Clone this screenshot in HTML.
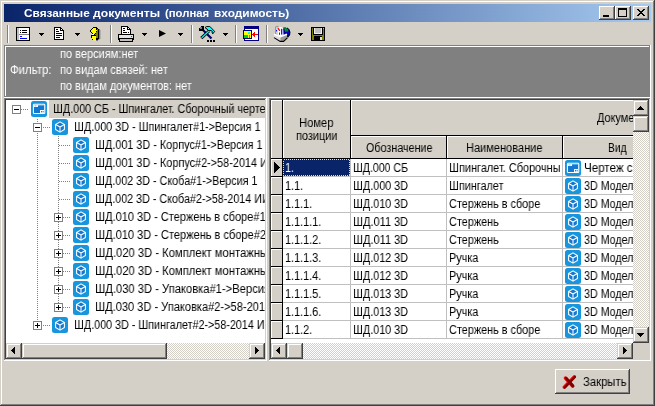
<!DOCTYPE html><html><head><meta charset="utf-8"><title>Связанные документы</title><style>
html,body{margin:0;padding:0}
body{width:655px;height:406px;overflow:hidden;background:#d4d0c8;font:12px/18px 'Liberation Sans', sans-serif;position:relative;color:#000}
.abs{position:absolute;display:block}
.ic{position:absolute;display:block}
.t{position:absolute;white-space:nowrap;transform-origin:0 0;display:block;will-change:transform}
.btn{background:#d4d0c8;box-sizing:border-box;box-shadow:inset -1px -1px 0 #404040,inset 1px 1px 0 #d4d0c8,inset -2px -2px 0 #808080,inset 2px 2px 0 #fff}
.trk{background-color:#fff;background-image:linear-gradient(45deg,#d4d0c8 25%,transparent 25%,transparent 75%,#d4d0c8 75%),linear-gradient(45deg,#d4d0c8 25%,transparent 25%,transparent 75%,#d4d0c8 75%);background-size:2px 2px;background-position:0 0,1px 1px}
.btn2{background:#d4d0c8;box-sizing:border-box;box-shadow:inset -1px -1px 0 #404040,inset 1px 1px 0 #fff,inset -2px -2px 0 #808080,inset 2px 2px 0 #d4d0c8}
.sunk{box-sizing:border-box;background:#fff;box-shadow:inset -1px -1px 0 #fff,inset 1px 1px 0 #808080,inset -2px -2px 0 #d4d0c8,inset 2px 2px 0 #404040}
</style></head><body><div class="abs" style="left:0;top:0;width:655px;height:406px;box-shadow:inset -1px -1px 0 #404040,inset 1px 1px 0 #d4d0c8,inset -2px -2px 0 #808080,inset 2px 2px 0 #fff"></div><div class="abs" style="left:4px;top:4px;width:647px;height:18px;background:linear-gradient(90deg,#0a246a,#a6caf0)"></div><span class="t" style="left:23.6px;top:4px;line-height:18px;color:#fff;transform:scaleX(1.0746);font-weight:bold;font-size:11px">Связанные</span><span class="t" style="left:93.4px;top:4px;line-height:18px;color:#fff;transform:scaleX(1.1039);font-weight:bold;font-size:11px">документы</span><span class="t" style="left:165px;top:4px;line-height:18px;color:#fff;transform:scaleX(1.0298);font-weight:bold;font-size:11px">(полная</span><span class="t" style="left:213.8px;top:4px;line-height:18px;color:#fff;transform:scaleX(1.0832);font-weight:bold;font-size:11px">входимость)</span><div class="btn2 abs" style="left:599px;top:6px;width:16px;height:14px"><i class="abs" style="left:4px;top:9px;width:6px;height:2px;background:#000"></i></div><div class="btn2 abs" style="left:615px;top:6px;width:16px;height:14px"><i class="abs" style="left:3px;top:2px;width:9px;height:9px;box-sizing:border-box;border:1px solid #000;border-top-width:2px"></i></div><div class="btn2 abs" style="left:633px;top:6px;width:16px;height:14px"><svg class="abs" style="left:4px;top:3px" width="8" height="7" shape-rendering="crispEdges"><path d="M0 0h2v1h-2zM6 0h2v1h-2zM1 1h2v1h-2zM5 1h2v1h-2zM2 2h4v1h-4zM3 3h2v1h-2zM2 4h4v1h-4zM1 5h2v1h-2zM5 5h2v1h-2zM0 6h2v1h-2zM6 6h2v1h-2z" fill="#000"/></svg></div><i class="abs" style="left:7px;top:25px;width:1px;height:18px;background:#808080"></i><i class="abs" style="left:8px;top:25px;width:1px;height:18px;background:#fff"></i><svg class="abs" style="left:16px;top:27px" width="14" height="14" shape-rendering="crispEdges"><rect x="0.5" y="0.5" width="13" height="13" fill="#fff" stroke="#000"/><rect x="1" y="1" width="2" height="12" fill="#c0c0c0"/><rect x="3" y="7" width="10" height="1" fill="#808080"/><rect x="4" y="3" width="1" height="1" fill="#000"/><rect x="6" y="3" width="5" height="1" fill="#000"/><rect x="4" y="5" width="1" height="1" fill="#000"/><rect x="6" y="5" width="5" height="1" fill="#000"/><rect x="4" y="9" width="2" height="1" fill="#00f"/><rect x="4" y="11" width="7" height="1" fill="#00f"/></svg><i class="abs" style="left:39px;top:33px;width:5px;height:1px;background:#000"></i><i class="abs" style="left:40px;top:34px;width:3px;height:1px;background:#000"></i><i class="abs" style="left:41px;top:35px;width:1px;height:1px;background:#000"></i><svg class="abs" style="left:54px;top:27px" width="10" height="13" shape-rendering="crispEdges"><path d="M0.5 0.5 H6.5 L9.5 3.5 V12.5 H0.5 Z" fill="#fff" stroke="#000"/><path d="M6.5 0.5 V3.5 H9.5" fill="none" stroke="#000"/><rect x="2" y="2" width="2" height="1"/><rect x="2" y="4" width="3" height="1"/><rect x="2" y="6" width="6" height="1"/><rect x="2" y="8" width="6" height="1"/><rect x="2" y="10" width="4" height="1"/></svg><i class="abs" style="left:75px;top:33px;width:5px;height:1px;background:#000"></i><i class="abs" style="left:76px;top:34px;width:3px;height:1px;background:#000"></i><i class="abs" style="left:77px;top:35px;width:1px;height:1px;background:#000"></i><svg class="abs" style="left:90px;top:27px" width="11" height="14" shape-rendering="crispEdges"><rect x="3" y="0" width="4" height="1" fill="#000"/><rect x="2" y="1" width="1" height="1" fill="#000"/><rect x="3" y="1" width="3" height="1" fill="#ff0"/><rect x="6" y="1" width="2" height="1" fill="#000"/><rect x="1" y="2" width="1" height="1" fill="#000"/><rect x="2" y="2" width="4" height="1" fill="#ff0"/><rect x="6" y="2" width="1" height="1" fill="#000"/><rect x="7" y="2" width="1" height="1" fill="#808000"/><rect x="8" y="2" width="1" height="1" fill="#000"/><rect x="9" y="2" width="1" height="1" fill="#808080"/><rect x="0" y="3" width="1" height="1" fill="#000"/><rect x="1" y="3" width="6" height="1" fill="#ff0"/><rect x="7" y="3" width="1" height="1" fill="#808000"/><rect x="8" y="3" width="1" height="1" fill="#000"/><rect x="9" y="3" width="1" height="1" fill="#808080"/><rect x="10" y="3" width="1" height="1" fill="#b4b2ac"/><rect x="0" y="4" width="1" height="1" fill="#000"/><rect x="1" y="4" width="5" height="1" fill="#ff0"/><rect x="6" y="4" width="1" height="1" fill="#000"/><rect x="7" y="4" width="1" height="1" fill="#808000"/><rect x="8" y="4" width="1" height="1" fill="#000"/><rect x="9" y="4" width="1" height="1" fill="#808080"/><rect x="10" y="4" width="1" height="1" fill="#b4b2ac"/><rect x="1" y="5" width="1" height="1" fill="#000"/><rect x="2" y="5" width="4" height="1" fill="#ff0"/><rect x="6" y="5" width="2" height="1" fill="#808000"/><rect x="8" y="5" width="1" height="1" fill="#000"/><rect x="9" y="5" width="1" height="1" fill="#808080"/><rect x="10" y="5" width="1" height="1" fill="#b4b2ac"/><rect x="2" y="6" width="1" height="1" fill="#000"/><rect x="3" y="6" width="2" height="1" fill="#ff0"/><rect x="5" y="6" width="1" height="1" fill="#000"/><rect x="6" y="6" width="2" height="1" fill="#808000"/><rect x="8" y="6" width="1" height="1" fill="#000"/><rect x="9" y="6" width="1" height="1" fill="#808080"/><rect x="10" y="6" width="1" height="1" fill="#b4b2ac"/><rect x="2" y="7" width="2" height="1" fill="#fff"/><rect x="4" y="7" width="1" height="1" fill="#000"/><rect x="5" y="7" width="3" height="1" fill="#808000"/><rect x="8" y="7" width="1" height="1" fill="#000"/><rect x="9" y="7" width="1" height="1" fill="#808080"/><rect x="10" y="7" width="1" height="1" fill="#b4b2ac"/><rect x="1" y="8" width="5" height="1" fill="#000"/><rect x="6" y="8" width="2" height="1" fill="#808000"/><rect x="8" y="8" width="1" height="1" fill="#000"/><rect x="9" y="8" width="1" height="1" fill="#808080"/><rect x="10" y="8" width="1" height="1" fill="#b4b2ac"/><rect x="1" y="9" width="1" height="1" fill="#000"/><rect x="2" y="9" width="4" height="1" fill="#ff0"/><rect x="6" y="9" width="2" height="1" fill="#808000"/><rect x="8" y="9" width="1" height="1" fill="#000"/><rect x="9" y="9" width="1" height="1" fill="#808080"/><rect x="10" y="9" width="1" height="1" fill="#b4b2ac"/><rect x="1" y="10" width="1" height="1" fill="#000"/><rect x="2" y="10" width="4" height="1" fill="#ff0"/><rect x="6" y="10" width="2" height="1" fill="#808000"/><rect x="8" y="10" width="1" height="1" fill="#000"/><rect x="9" y="10" width="1" height="1" fill="#808080"/><rect x="10" y="10" width="1" height="1" fill="#b4b2ac"/><rect x="2" y="11" width="4" height="1" fill="#ff0"/><rect x="6" y="11" width="3" height="1" fill="#000"/><rect x="9" y="11" width="1" height="1" fill="#808080"/><rect x="10" y="11" width="1" height="1" fill="#b4b2ac"/><rect x="2" y="12" width="1" height="1" fill="#000"/><rect x="3" y="12" width="3" height="1" fill="#ff0"/><rect x="6" y="12" width="2" height="1" fill="#000"/><rect x="8" y="12" width="1" height="1" fill="#808080"/><rect x="9" y="12" width="1" height="1" fill="#b4b2ac"/><rect x="3" y="13" width="3" height="1" fill="#e8e4a0"/><rect x="6" y="13" width="2" height="1" fill="#808080"/></svg><i class="abs" style="left:110px;top:25px;width:1px;height:18px;background:#808080"></i><i class="abs" style="left:111px;top:25px;width:1px;height:18px;background:#fff"></i><svg class="abs" style="left:118px;top:26px" width="16" height="16" shape-rendering="crispEdges"><path d="M3.5 8.5 V0.5 H9.5 L12.5 3.5 V8.5" fill="#fff" stroke="#000"/><path d="M9.5 0.5 V3.5 H12.5" fill="none" stroke="#000"/><rect x="5" y="2" width="2" height="1"/><rect x="5" y="4" width="2" height="1"/><rect x="5" y="6" width="4" height="1"/><rect x="10" y="6" width="1" height="1"/><rect x="0.5" y="8.5" width="15" height="6" fill="#e4e4e4" stroke="#000"/><rect x="1" y="12" width="14" height="1" fill="#000"/><rect x="1" y="13" width="14" height="2" fill="#c0c0c0"/><rect x="1" y="15" width="14" height="1" fill="#000"/><rect x="1" y="13" width="1" height="2" fill="#000"/><rect x="14" y="13" width="1" height="2" fill="#000"/><rect x="0" y="14" width="1" height="2" fill="#d4d0c8"/><rect x="15" y="14" width="1" height="2" fill="#d4d0c8"/><rect x="13" y="10" width="1" height="1" fill="#f00"/></svg><i class="abs" style="left:142px;top:33px;width:5px;height:1px;background:#000"></i><i class="abs" style="left:143px;top:34px;width:3px;height:1px;background:#000"></i><i class="abs" style="left:144px;top:35px;width:1px;height:1px;background:#000"></i><svg class="abs" style="left:159px;top:29px" width="8" height="10"><path d="M0 1 L7 4.5 L0 8 Z" fill="#000"/></svg><i class="abs" style="left:178px;top:33px;width:5px;height:1px;background:#000"></i><i class="abs" style="left:179px;top:34px;width:3px;height:1px;background:#000"></i><i class="abs" style="left:180px;top:35px;width:1px;height:1px;background:#000"></i><i class="abs" style="left:191px;top:25px;width:1px;height:18px;background:#808080"></i><i class="abs" style="left:192px;top:25px;width:1px;height:18px;background:#fff"></i><svg class="abs" style="left:199px;top:26px" width="17" height="16"><path d="M4 4 L12.5 12.5" stroke="#000060" stroke-width="2.2"/><g shape-rendering="crispEdges"><rect x="2" y="0" width="3" height="1"/><rect x="3" y="0" width="2" height="5"/><rect x="0" y="2" width="2" height="3"/><rect x="0" y="3" width="5" height="2"/><rect x="1" y="1" width="2" height="2" fill="#808080"/></g><path d="M10 5 L2.3 12.2" stroke="#000" stroke-width="3"/><path d="M10.3 4.7 L2.6 11.9" stroke="#0ff" stroke-width="1.3"/><path d="M6 1.6 L7.6 0.4 H10.8 L15.6 5.4 L13.9 7.8 L13 7 L13.4 5.4 L12 4.6 H9.2 L8 3 Z" fill="#0ff" stroke="#000" stroke-width="1"/><g shape-rendering="crispEdges"><rect x="8" y="14" width="2" height="2"/><rect x="11" y="14" width="2" height="2"/><rect x="14" y="14" width="2" height="2"/></g></svg><i class="abs" style="left:223px;top:33px;width:5px;height:1px;background:#000"></i><i class="abs" style="left:224px;top:34px;width:3px;height:1px;background:#000"></i><i class="abs" style="left:225px;top:35px;width:1px;height:1px;background:#000"></i><i class="abs" style="left:235px;top:25px;width:1px;height:18px;background:#808080"></i><i class="abs" style="left:236px;top:25px;width:1px;height:18px;background:#fff"></i><svg class="abs" style="left:243px;top:26px" width="16" height="15" shape-rendering="crispEdges"><rect x="1.5" y="0.5" width="14" height="14" fill="#fff" stroke="#000080"/><rect x="1" y="0" width="15" height="3" fill="#000080"/><rect x="0.5" y="4.5" width="8" height="8" fill="#ff0" stroke="#000080"/><path d="M1 12 V8 L4 12 Z" fill="#0c0"/><rect x="1" y="9" width="3" height="3" fill="#00d000"/><rect x="5" y="6" width="2" height="2" fill="#0ff"/><rect x="4" y="9" width="1" height="3" fill="#0c0"/><rect x="6" y="9" width="1" height="3" fill="#0aa"/><rect x="9" y="8" width="6" height="1" fill="#f00"/><rect x="10" y="7" width="1" height="3" fill="#f00"/><rect x="11" y="6" width="1" height="5" fill="#f00"/></svg><i class="abs" style="left:266px;top:25px;width:1px;height:18px;background:#808080"></i><i class="abs" style="left:267px;top:25px;width:1px;height:18px;background:#fff"></i><svg class="abs" style="left:272px;top:24px" width="20" height="20"><circle cx="12.3" cy="8.8" r="5.3" fill="#0000c8"/><path d="M15 4 A5.4 5.4 0 0 1 15.8 13" fill="none" stroke="#000" stroke-width="1.3"/><path d="M10.8 3.2 L13.8 3.2 L16.2 5.4 L16.2 7.6 L13 7.8 L12.4 5.4 L10.8 4.8 Z" fill="#008838"/><path d="M10.8 3.1 L13 3.2 L12.6 4.1 L10.8 4.1 Z" fill="#10a0a0"/><path d="M3.5 2.8 L6 2.2 V10.2 H3.5 Z" fill="#d4d4d4" stroke="#808080" stroke-width="0.7"/><path d="M5.5 3.8 L8.6 3 L11.6 3.8 L11.9 11.5 L8.5 12.4 L5.5 11.2 Z" fill="#fff"/><path d="M11.7 4.2 L12 10.7" stroke="#000" stroke-width="0.8"/><path d="M6 4.2 L7.8 6.8" stroke="#f00" stroke-width="1.3"/><rect x="7" y="8.5" width="0.9" height="2.3" fill="#00f"/><rect x="9.1" y="4.8" width="1.2" height="5.8" fill="#00f"/><rect x="4" y="6" width="0.9" height="1.4" fill="#00f"/><path d="M2 10.4 L8.5 13 V17.4 L2 13.6 Z" fill="#dedede"/><path d="M8.5 13 L15 10.4 V13.8 L11.6 17.4 H8.5 Z" fill="#9a9a9a"/><path d="M2 10.3 L8.5 12.8 L15 10.3" fill="none" stroke="#fff" stroke-width="1.5"/><path d="M2 13.6 L8.2 17.4 H11.6 L15.6 13.6" fill="none" stroke="#000" stroke-width="1.1"/></svg><i class="abs" style="left:298px;top:33px;width:5px;height:1px;background:#000"></i><i class="abs" style="left:299px;top:34px;width:3px;height:1px;background:#000"></i><i class="abs" style="left:300px;top:35px;width:1px;height:1px;background:#000"></i><svg class="abs" style="left:311px;top:27px" width="14" height="14" shape-rendering="crispEdges"><rect x="0.5" y="0.5" width="13" height="13" fill="#808000" stroke="#000"/><rect x="3" y="1" width="8" height="6" fill="#c0c0c0"/><rect x="2" y="1" width="1" height="6" fill="#000"/><rect x="11" y="1" width="1" height="6" fill="#000"/><rect x="2" y="7" width="10" height="1" fill="#000"/><rect x="3" y="1" width="1" height="6" fill="#eee"/><rect x="10" y="1" width="1" height="6" fill="#eee"/><rect x="3" y="6" width="8" height="1" fill="#eee"/><rect x="3" y="9" width="8" height="4" fill="#000"/><rect x="9" y="10" width="2" height="3" fill="#e0e0e0"/><rect x="12" y="1" width="1" height="1" fill="#c0c0c0"/></svg><div class="abs" style="left:4px;top:45px;width:647px;height:53px;background:#808080;box-shadow:inset -1px -1px 0 #fff,inset 1px 1px 0 #808080,inset -2px -2px 0 #808080,inset 2px 2px 0 #fff"></div><span class="t" style="left:10px;top:61px;line-height:18px;color:#fff;transform:scaleX(0.9506)">Фильтр:</span><span class="t" style="left:60px;top:45px;line-height:18px;color:#fff;transform:scaleX(0.9181)">по версиям:нет</span><span class="t" style="left:60px;top:61px;line-height:18px;color:#fff;transform:scaleX(0.9182)">по видам связей: нет</span><span class="t" style="left:60px;top:77px;line-height:18px;color:#fff;transform:scaleX(0.9102)">по видам документов: нет</span><div class="abs sunk" style="left:4px;top:98px;width:263px;height:263px"></div><div class="abs" style="left:6px;top:100px;width:259px;height:243px;background:#fff;overflow:hidden"><svg class="abs" style="left:0;top:0" width="259" height="243" shape-rendering="crispEdges"><line x1="15" y1="9.5" x2="23" y2="9.5" stroke="#808080" stroke-dasharray="1 1"/><line x1="37" y1="27.5" x2="44" y2="27.5" stroke="#808080" stroke-dasharray="1 1"/><line x1="53" y1="45.5" x2="65" y2="45.5" stroke="#808080" stroke-dasharray="1 1"/><line x1="53" y1="63.5" x2="65" y2="63.5" stroke="#808080" stroke-dasharray="1 1"/><line x1="53" y1="81.5" x2="65" y2="81.5" stroke="#808080" stroke-dasharray="1 1"/><line x1="53" y1="99.5" x2="65" y2="99.5" stroke="#808080" stroke-dasharray="1 1"/><line x1="57" y1="117.5" x2="65" y2="117.5" stroke="#808080" stroke-dasharray="1 1"/><line x1="57" y1="135.5" x2="65" y2="135.5" stroke="#808080" stroke-dasharray="1 1"/><line x1="57" y1="153.5" x2="65" y2="153.5" stroke="#808080" stroke-dasharray="1 1"/><line x1="57" y1="171.5" x2="65" y2="171.5" stroke="#808080" stroke-dasharray="1 1"/><line x1="57" y1="189.5" x2="65" y2="189.5" stroke="#808080" stroke-dasharray="1 1"/><line x1="57" y1="207.5" x2="65" y2="207.5" stroke="#808080" stroke-dasharray="1 1"/><line x1="37" y1="225.5" x2="44" y2="225.5" stroke="#808080" stroke-dasharray="1 1"/><line x1="31.5" y1="19" x2="31.5" y2="226" stroke="#808080" stroke-dasharray="1 1"/><line x1="52.5" y1="36" x2="52.5" y2="208" stroke="#808080" stroke-dasharray="1 1"/></svg><div class="abs" style="left:43px;top:0px;width:300px;height:18px;background:#d4d0c8"></div><svg class="ic" style="left:25px;top:1px" width="16" height="16" viewBox="0 0 16 16"><rect width="16" height="16" rx="2.5" fill="#1796de"/><rect x="2.45" y="3.3" width="11.3" height="9.2" rx="0.8" fill="#1478d0" stroke="#fff" stroke-width="1.1"/><rect x="3" y="4" width="4" height="2" fill="#fff"/><rect x="3.6" y="4.5" width="2" height="0.8" fill="#5bb4ea"/><rect x="7" y="4" width="6" height="1" fill="#4aa8e6"/><rect x="9" y="9" width="4" height="3" fill="#fff"/><rect x="10" y="10" width="1" height="1.4" fill="#1478d0"/><rect x="11.6" y="10" width="1" height="1.4" fill="#1478d0"/></svg><span class="t" style="left:47px;top:0px;line-height:18px;color:#000;transform:scaleX(0.8972)">ШД.000 СБ - Шпингалет. Сборочный чертеж</span><svg class="ic" style="left:46px;top:19px" width="16" height="16" viewBox="0 0 16 16"><rect width="16" height="16" rx="2.5" fill="#1796de"/><path d="M8 2.9 L12.4 5.45 L12.4 10.55 L8 13.1 L3.6 10.55 L3.6 5.45 Z" fill="#1478d0" stroke="#fff" stroke-width="1.05" stroke-linejoin="round"/><path d="M3.6 5.45 L8 8 L12.4 5.45 M8 8 L8 13.1" fill="none" stroke="#fff" stroke-width="1.05" stroke-linejoin="round"/></svg><span class="t" style="left:68px;top:18px;line-height:18px;color:#000;transform:scaleX(0.9004)">ШД.000 3D - Шпингалет#1-&gt;Версия 1</span><svg class="ic" style="left:67px;top:37px" width="16" height="16" viewBox="0 0 16 16"><rect width="16" height="16" rx="2.5" fill="#1796de"/><path d="M8 2.9 L12.4 5.45 L12.4 10.55 L8 13.1 L3.6 10.55 L3.6 5.45 Z" fill="#1478d0" stroke="#fff" stroke-width="1.05" stroke-linejoin="round"/><path d="M3.6 5.45 L8 8 L12.4 5.45 M8 8 L8 13.1" fill="none" stroke="#fff" stroke-width="1.05" stroke-linejoin="round"/></svg><span class="t" style="left:89px;top:36px;line-height:18px;color:#000;transform:scaleX(0.9033)">ШД.001 3D - Корпус#1-&gt;Версия 1</span><svg class="ic" style="left:67px;top:55px" width="16" height="16" viewBox="0 0 16 16"><rect width="16" height="16" rx="2.5" fill="#1796de"/><path d="M8 2.9 L12.4 5.45 L12.4 10.55 L8 13.1 L3.6 10.55 L3.6 5.45 Z" fill="#1478d0" stroke="#fff" stroke-width="1.05" stroke-linejoin="round"/><path d="M3.6 5.45 L8 8 L12.4 5.45 M8 8 L8 13.1" fill="none" stroke="#fff" stroke-width="1.05" stroke-linejoin="round"/></svg><span class="t" style="left:89px;top:54px;line-height:18px;color:#000;transform:scaleX(0.9054)">ШД.001 3D - Корпус#2-&gt;58-2014 ИИ</span><svg class="ic" style="left:67px;top:73px" width="16" height="16" viewBox="0 0 16 16"><rect width="16" height="16" rx="2.5" fill="#1796de"/><path d="M8 2.9 L12.4 5.45 L12.4 10.55 L8 13.1 L3.6 10.55 L3.6 5.45 Z" fill="#1478d0" stroke="#fff" stroke-width="1.05" stroke-linejoin="round"/><path d="M3.6 5.45 L8 8 L12.4 5.45 M8 8 L8 13.1" fill="none" stroke="#fff" stroke-width="1.05" stroke-linejoin="round"/></svg><span class="t" style="left:89px;top:72px;line-height:18px;color:#000;transform:scaleX(0.8991)">ШД.002 3D - Скоба#1-&gt;Версия 1</span><svg class="ic" style="left:67px;top:91px" width="16" height="16" viewBox="0 0 16 16"><rect width="16" height="16" rx="2.5" fill="#1796de"/><path d="M8 2.9 L12.4 5.45 L12.4 10.55 L8 13.1 L3.6 10.55 L3.6 5.45 Z" fill="#1478d0" stroke="#fff" stroke-width="1.05" stroke-linejoin="round"/><path d="M3.6 5.45 L8 8 L12.4 5.45 M8 8 L8 13.1" fill="none" stroke="#fff" stroke-width="1.05" stroke-linejoin="round"/></svg><span class="t" style="left:89px;top:90px;line-height:18px;color:#000;transform:scaleX(0.8970)">ШД.002 3D - Скоба#2-&gt;58-2014 ИИ</span><svg class="ic" style="left:67px;top:109px" width="16" height="16" viewBox="0 0 16 16"><rect width="16" height="16" rx="2.5" fill="#1796de"/><path d="M8 2.9 L12.4 5.45 L12.4 10.55 L8 13.1 L3.6 10.55 L3.6 5.45 Z" fill="#1478d0" stroke="#fff" stroke-width="1.05" stroke-linejoin="round"/><path d="M3.6 5.45 L8 8 L12.4 5.45 M8 8 L8 13.1" fill="none" stroke="#fff" stroke-width="1.05" stroke-linejoin="round"/></svg><span class="t" style="left:89px;top:108px;line-height:18px;color:#000;transform:scaleX(0.9169)">ШД.010 3D - Стержень в сборе#1-&gt;Версия 1</span><svg class="ic" style="left:67px;top:127px" width="16" height="16" viewBox="0 0 16 16"><rect width="16" height="16" rx="2.5" fill="#1796de"/><path d="M8 2.9 L12.4 5.45 L12.4 10.55 L8 13.1 L3.6 10.55 L3.6 5.45 Z" fill="#1478d0" stroke="#fff" stroke-width="1.05" stroke-linejoin="round"/><path d="M3.6 5.45 L8 8 L12.4 5.45 M8 8 L8 13.1" fill="none" stroke="#fff" stroke-width="1.05" stroke-linejoin="round"/></svg><span class="t" style="left:89px;top:126px;line-height:18px;color:#000;transform:scaleX(0.9190)">ШД.010 3D - Стержень в сборе#2-&gt;58-2014 ИИ</span><svg class="ic" style="left:67px;top:145px" width="16" height="16" viewBox="0 0 16 16"><rect width="16" height="16" rx="2.5" fill="#1796de"/><path d="M8 2.9 L12.4 5.45 L12.4 10.55 L8 13.1 L3.6 10.55 L3.6 5.45 Z" fill="#1478d0" stroke="#fff" stroke-width="1.05" stroke-linejoin="round"/><path d="M3.6 5.45 L8 8 L12.4 5.45 M8 8 L8 13.1" fill="none" stroke="#fff" stroke-width="1.05" stroke-linejoin="round"/></svg><span class="t" style="left:89px;top:144px;line-height:18px;color:#000;transform:scaleX(0.9355)">ШД.020 3D - Комплект монтажных частей#1-&gt;Версия 1</span><svg class="ic" style="left:67px;top:163px" width="16" height="16" viewBox="0 0 16 16"><rect width="16" height="16" rx="2.5" fill="#1796de"/><path d="M8 2.9 L12.4 5.45 L12.4 10.55 L8 13.1 L3.6 10.55 L3.6 5.45 Z" fill="#1478d0" stroke="#fff" stroke-width="1.05" stroke-linejoin="round"/><path d="M3.6 5.45 L8 8 L12.4 5.45 M8 8 L8 13.1" fill="none" stroke="#fff" stroke-width="1.05" stroke-linejoin="round"/></svg><span class="t" style="left:89px;top:162px;line-height:18px;color:#000;transform:scaleX(0.9355)">ШД.020 3D - Комплект монтажных частей#2-&gt;58-2014 ИИ</span><svg class="ic" style="left:67px;top:181px" width="16" height="16" viewBox="0 0 16 16"><rect width="16" height="16" rx="2.5" fill="#1796de"/><path d="M8 2.9 L12.4 5.45 L12.4 10.55 L8 13.1 L3.6 10.55 L3.6 5.45 Z" fill="#1478d0" stroke="#fff" stroke-width="1.05" stroke-linejoin="round"/><path d="M3.6 5.45 L8 8 L12.4 5.45 M8 8 L8 13.1" fill="none" stroke="#fff" stroke-width="1.05" stroke-linejoin="round"/></svg><span class="t" style="left:89px;top:180px;line-height:18px;color:#000;transform:scaleX(0.9331)">ШД.030 3D - Упаковка#1-&gt;Версия 1</span><svg class="ic" style="left:67px;top:199px" width="16" height="16" viewBox="0 0 16 16"><rect width="16" height="16" rx="2.5" fill="#1796de"/><path d="M8 2.9 L12.4 5.45 L12.4 10.55 L8 13.1 L3.6 10.55 L3.6 5.45 Z" fill="#1478d0" stroke="#fff" stroke-width="1.05" stroke-linejoin="round"/><path d="M3.6 5.45 L8 8 L12.4 5.45 M8 8 L8 13.1" fill="none" stroke="#fff" stroke-width="1.05" stroke-linejoin="round"/></svg><span class="t" style="left:89px;top:198px;line-height:18px;color:#000;transform:scaleX(0.9218)">ШД.030 3D - Упаковка#2-&gt;58-2014 ИИ</span><svg class="ic" style="left:46px;top:217px" width="16" height="16" viewBox="0 0 16 16"><rect width="16" height="16" rx="2.5" fill="#1796de"/><path d="M8 2.9 L12.4 5.45 L12.4 10.55 L8 13.1 L3.6 10.55 L3.6 5.45 Z" fill="#1478d0" stroke="#fff" stroke-width="1.05" stroke-linejoin="round"/><path d="M3.6 5.45 L8 8 L12.4 5.45 M8 8 L8 13.1" fill="none" stroke="#fff" stroke-width="1.05" stroke-linejoin="round"/></svg><span class="t" style="left:68px;top:216px;line-height:18px;color:#000;transform:scaleX(0.8962)">ШД.000 3D - Шпингалет#2-&gt;58-2014 ИИ</span><div class="abs" style="left:6px;top:5px;width:7px;height:7px;border:1px solid #808080;background:#fff"><i class="abs" style="left:1px;top:3px;width:5px;height:1px;background:#000"></i></div><div class="abs" style="left:27px;top:23px;width:7px;height:7px;border:1px solid #808080;background:#fff"><i class="abs" style="left:1px;top:3px;width:5px;height:1px;background:#000"></i></div><div class="abs" style="left:48px;top:113px;width:7px;height:7px;border:1px solid #808080;background:#fff"><i class="abs" style="left:1px;top:3px;width:5px;height:1px;background:#000"></i><i class="abs" style="left:3px;top:1px;width:1px;height:5px;background:#000"></i></div><div class="abs" style="left:48px;top:131px;width:7px;height:7px;border:1px solid #808080;background:#fff"><i class="abs" style="left:1px;top:3px;width:5px;height:1px;background:#000"></i><i class="abs" style="left:3px;top:1px;width:1px;height:5px;background:#000"></i></div><div class="abs" style="left:48px;top:149px;width:7px;height:7px;border:1px solid #808080;background:#fff"><i class="abs" style="left:1px;top:3px;width:5px;height:1px;background:#000"></i><i class="abs" style="left:3px;top:1px;width:1px;height:5px;background:#000"></i></div><div class="abs" style="left:48px;top:167px;width:7px;height:7px;border:1px solid #808080;background:#fff"><i class="abs" style="left:1px;top:3px;width:5px;height:1px;background:#000"></i><i class="abs" style="left:3px;top:1px;width:1px;height:5px;background:#000"></i></div><div class="abs" style="left:48px;top:185px;width:7px;height:7px;border:1px solid #808080;background:#fff"><i class="abs" style="left:1px;top:3px;width:5px;height:1px;background:#000"></i><i class="abs" style="left:3px;top:1px;width:1px;height:5px;background:#000"></i></div><div class="abs" style="left:48px;top:203px;width:7px;height:7px;border:1px solid #808080;background:#fff"><i class="abs" style="left:1px;top:3px;width:5px;height:1px;background:#000"></i><i class="abs" style="left:3px;top:1px;width:1px;height:5px;background:#000"></i></div><div class="abs" style="left:27px;top:221px;width:7px;height:7px;border:1px solid #808080;background:#fff"><i class="abs" style="left:1px;top:3px;width:5px;height:1px;background:#000"></i><i class="abs" style="left:3px;top:1px;width:1px;height:5px;background:#000"></i></div></div><div class="trk abs" style="left:6px;top:343px;width:259px;height:16px"></div><div class="btn abs" style="left:6px;top:343px;width:16px;height:16px"><i class="abs" style="left:5px;top:7px;width:1px;height:1px;background:#000"></i><i class="abs" style="left:6px;top:6px;width:1px;height:3px;background:#000"></i><i class="abs" style="left:7px;top:5px;width:1px;height:5px;background:#000"></i><i class="abs" style="left:8px;top:4px;width:1px;height:7px;background:#000"></i></div><div class="btn abs" style="left:22px;top:343px;width:145px;height:16px"></div><div class="btn abs" style="left:249px;top:343px;width:16px;height:16px"><i class="abs" style="left:6px;top:4px;width:1px;height:7px;background:#000"></i><i class="abs" style="left:7px;top:5px;width:1px;height:5px;background:#000"></i><i class="abs" style="left:8px;top:6px;width:1px;height:3px;background:#000"></i><i class="abs" style="left:9px;top:7px;width:1px;height:1px;background:#000"></i></div><div class="abs sunk" style="left:269px;top:98px;width:382px;height:263px"></div><div class="abs" style="left:271px;top:100px;width:362px;height:243px;background:#fff;overflow:hidden"><div class="abs" style="left:0px;top:0px;width:11px;height:58px;background:#d4d0c8;box-shadow:inset 1px 1px 0 #fff"></div><i class="abs" style="left:11px;top:0px;width:1px;height:59px;background:#000"></i><i class="abs" style="left:0px;top:58px;width:12px;height:1px;background:#000"></i><div class="abs" style="left:12px;top:0px;width:67px;height:58px;background:#d4d0c8;box-shadow:inset 1px 1px 0 #fff"></div><i class="abs" style="left:79px;top:0px;width:1px;height:59px;background:#000"></i><i class="abs" style="left:12px;top:58px;width:68px;height:1px;background:#000"></i><div class="abs" style="left:80px;top:0px;width:400px;height:35px;background:#d4d0c8;box-shadow:inset 1px 1px 0 #fff"></div><i class="abs" style="left:480px;top:0px;width:1px;height:36px;background:#000"></i><i class="abs" style="left:80px;top:35px;width:401px;height:1px;background:#000"></i><div class="abs" style="left:80px;top:36px;width:95px;height:22px;background:#d4d0c8;box-shadow:inset 1px 1px 0 #fff"></div><i class="abs" style="left:175px;top:36px;width:1px;height:23px;background:#000"></i><i class="abs" style="left:80px;top:58px;width:96px;height:1px;background:#000"></i><div class="abs" style="left:176px;top:36px;width:115px;height:22px;background:#d4d0c8;box-shadow:inset 1px 1px 0 #fff"></div><i class="abs" style="left:291px;top:36px;width:1px;height:23px;background:#000"></i><i class="abs" style="left:176px;top:58px;width:116px;height:1px;background:#000"></i><div class="abs" style="left:292px;top:36px;width:110px;height:22px;background:#d4d0c8;box-shadow:inset 1px 1px 0 #fff"></div><i class="abs" style="left:402px;top:36px;width:1px;height:23px;background:#000"></i><i class="abs" style="left:292px;top:58px;width:111px;height:1px;background:#000"></i><span class="t" style="left:28px;top:14px;line-height:18px;color:#000;transform:scaleX(0.9340)">Номер</span><span class="t" style="left:25px;top:27px;line-height:18px;color:#000;transform:scaleX(0.9115)">позиции</span><span class="t" style="left:326px;top:9px;line-height:18px;color:#000;transform:scaleX(0.9050)">Документ</span><span class="t" style="left:95px;top:39px;line-height:18px;color:#000;transform:scaleX(0.8960)">Обозначение</span><span class="t" style="left:195px;top:39px;line-height:18px;color:#000;transform:scaleX(0.9196)">Наименование</span><span class="t" style="left:337px;top:39px;line-height:18px;color:#000;transform:scaleX(0.8518)">Вид</span><div class="abs" style="left:0px;top:59px;width:11px;height:17px;background:#d4d0c8;box-shadow:inset 1px 1px 0 #fff"></div><i class="abs" style="left:11px;top:59px;width:1px;height:18px;background:#000"></i><i class="abs" style="left:0px;top:76px;width:12px;height:1px;background:#000"></i><i class="abs" style="left:12px;top:76px;width:400px;height:1px;background:#c0c0c0"></i><div class="abs" style="left:12px;top:59px;width:67px;height:17px;background:#0a246a"></div><svg class="abs" style="left:12px;top:59px" width="67" height="17" shape-rendering="crispEdges"><rect x="0.5" y="0.5" width="66" height="16" fill="none" stroke="#f5db95" stroke-dasharray="1 1"/></svg><i class="abs" style="left:3px;top:62px;width:1px;height:11px;background:#000"></i><i class="abs" style="left:4px;top:63px;width:1px;height:9px;background:#000"></i><i class="abs" style="left:5px;top:64px;width:1px;height:7px;background:#000"></i><i class="abs" style="left:6px;top:65px;width:1px;height:5px;background:#000"></i><i class="abs" style="left:7px;top:66px;width:1px;height:3px;background:#000"></i><i class="abs" style="left:8px;top:67px;width:1px;height:1px;background:#000"></i><span class="t" style="left:14px;top:59px;line-height:18px;color:#fff;transform:scaleX(0.9050)">1.</span><span class="t" style="left:82px;top:59px;line-height:18px;color:#000;transform:scaleX(0.8820)">ШД.000 СБ</span><div class="abs" style="left:178px;top:59px;width:112px;height:17px;overflow:hidden"><span class="t" style="left:0px;top:0px;line-height:18px;color:#000;transform:scaleX(0.9100)">Шпингалет. Сборочный чертеж</span></div><svg class="ic" style="left:294px;top:60px" width="16" height="16" viewBox="0 0 16 16"><rect width="16" height="16" rx="2.5" fill="#1796de"/><rect x="2.45" y="3.3" width="11.3" height="9.2" rx="0.8" fill="#1478d0" stroke="#fff" stroke-width="1.1"/><rect x="3" y="4" width="4" height="2" fill="#fff"/><rect x="3.6" y="4.5" width="2" height="0.8" fill="#5bb4ea"/><rect x="7" y="4" width="6" height="1" fill="#4aa8e6"/><rect x="9" y="9" width="4" height="3" fill="#fff"/><rect x="10" y="10" width="1" height="1.4" fill="#1478d0"/><rect x="11.6" y="10" width="1" height="1.4" fill="#1478d0"/></svg><span class="t" style="left:312.6px;top:59px;line-height:18px;color:#000;transform:scaleX(0.9654)">Чертеж сборочный</span><div class="abs" style="left:0px;top:77px;width:11px;height:17px;background:#d4d0c8;box-shadow:inset 1px 1px 0 #fff"></div><i class="abs" style="left:11px;top:77px;width:1px;height:18px;background:#000"></i><i class="abs" style="left:0px;top:94px;width:12px;height:1px;background:#000"></i><i class="abs" style="left:12px;top:94px;width:400px;height:1px;background:#c0c0c0"></i><span class="t" style="left:14px;top:77px;line-height:18px;color:#000;transform:scaleX(0.9050)">1.1.</span><span class="t" style="left:82px;top:77px;line-height:18px;color:#000;transform:scaleX(0.8993)">ШД.000 3D</span><div class="abs" style="left:178px;top:77px;width:112px;height:17px;overflow:hidden"><span class="t" style="left:0px;top:0px;line-height:18px;color:#000;transform:scaleX(0.9025)">Шпингалет</span></div><svg class="ic" style="left:294px;top:78px" width="16" height="16" viewBox="0 0 16 16"><rect width="16" height="16" rx="2.5" fill="#1796de"/><path d="M8 2.9 L12.4 5.45 L12.4 10.55 L8 13.1 L3.6 10.55 L3.6 5.45 Z" fill="#1478d0" stroke="#fff" stroke-width="1.05" stroke-linejoin="round"/><path d="M3.6 5.45 L8 8 L12.4 5.45 M8 8 L8 13.1" fill="none" stroke="#fff" stroke-width="1.05" stroke-linejoin="round"/></svg><span class="t" style="left:312.6px;top:77px;line-height:18px;color:#000;transform:scaleX(0.8901)">3D Модель</span><div class="abs" style="left:0px;top:95px;width:11px;height:17px;background:#d4d0c8;box-shadow:inset 1px 1px 0 #fff"></div><i class="abs" style="left:11px;top:95px;width:1px;height:18px;background:#000"></i><i class="abs" style="left:0px;top:112px;width:12px;height:1px;background:#000"></i><i class="abs" style="left:12px;top:112px;width:400px;height:1px;background:#c0c0c0"></i><span class="t" style="left:14px;top:95px;line-height:18px;color:#000;transform:scaleX(0.9050)">1.1.1.</span><span class="t" style="left:82px;top:95px;line-height:18px;color:#000;transform:scaleX(0.8993)">ШД.010 3D</span><div class="abs" style="left:178px;top:95px;width:112px;height:17px;overflow:hidden"><span class="t" style="left:0px;top:0px;line-height:18px;color:#000;transform:scaleX(0.9050)">Стержень в сборе</span></div><svg class="ic" style="left:294px;top:96px" width="16" height="16" viewBox="0 0 16 16"><rect width="16" height="16" rx="2.5" fill="#1796de"/><path d="M8 2.9 L12.4 5.45 L12.4 10.55 L8 13.1 L3.6 10.55 L3.6 5.45 Z" fill="#1478d0" stroke="#fff" stroke-width="1.05" stroke-linejoin="round"/><path d="M3.6 5.45 L8 8 L12.4 5.45 M8 8 L8 13.1" fill="none" stroke="#fff" stroke-width="1.05" stroke-linejoin="round"/></svg><span class="t" style="left:312.6px;top:95px;line-height:18px;color:#000;transform:scaleX(0.8901)">3D Модель</span><div class="abs" style="left:0px;top:113px;width:11px;height:17px;background:#d4d0c8;box-shadow:inset 1px 1px 0 #fff"></div><i class="abs" style="left:11px;top:113px;width:1px;height:18px;background:#000"></i><i class="abs" style="left:0px;top:130px;width:12px;height:1px;background:#000"></i><i class="abs" style="left:12px;top:130px;width:400px;height:1px;background:#c0c0c0"></i><span class="t" style="left:14px;top:113px;line-height:18px;color:#000;transform:scaleX(0.9050)">1.1.1.1.</span><span class="t" style="left:82px;top:113px;line-height:18px;color:#000;transform:scaleX(0.9126)">ШД.011 3D</span><div class="abs" style="left:178px;top:113px;width:112px;height:17px;overflow:hidden"><span class="t" style="left:0px;top:0px;line-height:18px;color:#000;transform:scaleX(0.9050)">Стержень</span></div><svg class="ic" style="left:294px;top:114px" width="16" height="16" viewBox="0 0 16 16"><rect width="16" height="16" rx="2.5" fill="#1796de"/><path d="M8 2.9 L12.4 5.45 L12.4 10.55 L8 13.1 L3.6 10.55 L3.6 5.45 Z" fill="#1478d0" stroke="#fff" stroke-width="1.05" stroke-linejoin="round"/><path d="M3.6 5.45 L8 8 L12.4 5.45 M8 8 L8 13.1" fill="none" stroke="#fff" stroke-width="1.05" stroke-linejoin="round"/></svg><span class="t" style="left:312.6px;top:113px;line-height:18px;color:#000;transform:scaleX(0.8901)">3D Модель</span><div class="abs" style="left:0px;top:131px;width:11px;height:17px;background:#d4d0c8;box-shadow:inset 1px 1px 0 #fff"></div><i class="abs" style="left:11px;top:131px;width:1px;height:18px;background:#000"></i><i class="abs" style="left:0px;top:148px;width:12px;height:1px;background:#000"></i><i class="abs" style="left:12px;top:148px;width:400px;height:1px;background:#c0c0c0"></i><span class="t" style="left:14px;top:131px;line-height:18px;color:#000;transform:scaleX(0.9050)">1.1.1.2.</span><span class="t" style="left:82px;top:131px;line-height:18px;color:#000;transform:scaleX(0.9126)">ШД.011 3D</span><div class="abs" style="left:178px;top:131px;width:112px;height:17px;overflow:hidden"><span class="t" style="left:0px;top:0px;line-height:18px;color:#000;transform:scaleX(0.9050)">Стержень</span></div><svg class="ic" style="left:294px;top:132px" width="16" height="16" viewBox="0 0 16 16"><rect width="16" height="16" rx="2.5" fill="#1796de"/><path d="M8 2.9 L12.4 5.45 L12.4 10.55 L8 13.1 L3.6 10.55 L3.6 5.45 Z" fill="#1478d0" stroke="#fff" stroke-width="1.05" stroke-linejoin="round"/><path d="M3.6 5.45 L8 8 L12.4 5.45 M8 8 L8 13.1" fill="none" stroke="#fff" stroke-width="1.05" stroke-linejoin="round"/></svg><span class="t" style="left:312.6px;top:131px;line-height:18px;color:#000;transform:scaleX(0.8901)">3D Модель</span><div class="abs" style="left:0px;top:149px;width:11px;height:17px;background:#d4d0c8;box-shadow:inset 1px 1px 0 #fff"></div><i class="abs" style="left:11px;top:149px;width:1px;height:18px;background:#000"></i><i class="abs" style="left:0px;top:166px;width:12px;height:1px;background:#000"></i><i class="abs" style="left:12px;top:166px;width:400px;height:1px;background:#c0c0c0"></i><span class="t" style="left:14px;top:149px;line-height:18px;color:#000;transform:scaleX(0.9050)">1.1.1.3.</span><span class="t" style="left:82px;top:149px;line-height:18px;color:#000;transform:scaleX(0.8993)">ШД.012 3D</span><div class="abs" style="left:178px;top:149px;width:112px;height:17px;overflow:hidden"><span class="t" style="left:0px;top:0px;line-height:18px;color:#000;transform:scaleX(0.9050)">Ручка</span></div><svg class="ic" style="left:294px;top:150px" width="16" height="16" viewBox="0 0 16 16"><rect width="16" height="16" rx="2.5" fill="#1796de"/><path d="M8 2.9 L12.4 5.45 L12.4 10.55 L8 13.1 L3.6 10.55 L3.6 5.45 Z" fill="#1478d0" stroke="#fff" stroke-width="1.05" stroke-linejoin="round"/><path d="M3.6 5.45 L8 8 L12.4 5.45 M8 8 L8 13.1" fill="none" stroke="#fff" stroke-width="1.05" stroke-linejoin="round"/></svg><span class="t" style="left:312.6px;top:149px;line-height:18px;color:#000;transform:scaleX(0.8901)">3D Модель</span><div class="abs" style="left:0px;top:167px;width:11px;height:17px;background:#d4d0c8;box-shadow:inset 1px 1px 0 #fff"></div><i class="abs" style="left:11px;top:167px;width:1px;height:18px;background:#000"></i><i class="abs" style="left:0px;top:184px;width:12px;height:1px;background:#000"></i><i class="abs" style="left:12px;top:184px;width:400px;height:1px;background:#c0c0c0"></i><span class="t" style="left:14px;top:167px;line-height:18px;color:#000;transform:scaleX(0.9050)">1.1.1.4.</span><span class="t" style="left:82px;top:167px;line-height:18px;color:#000;transform:scaleX(0.8993)">ШД.012 3D</span><div class="abs" style="left:178px;top:167px;width:112px;height:17px;overflow:hidden"><span class="t" style="left:0px;top:0px;line-height:18px;color:#000;transform:scaleX(0.9050)">Ручка</span></div><svg class="ic" style="left:294px;top:168px" width="16" height="16" viewBox="0 0 16 16"><rect width="16" height="16" rx="2.5" fill="#1796de"/><path d="M8 2.9 L12.4 5.45 L12.4 10.55 L8 13.1 L3.6 10.55 L3.6 5.45 Z" fill="#1478d0" stroke="#fff" stroke-width="1.05" stroke-linejoin="round"/><path d="M3.6 5.45 L8 8 L12.4 5.45 M8 8 L8 13.1" fill="none" stroke="#fff" stroke-width="1.05" stroke-linejoin="round"/></svg><span class="t" style="left:312.6px;top:167px;line-height:18px;color:#000;transform:scaleX(0.8901)">3D Модель</span><div class="abs" style="left:0px;top:185px;width:11px;height:17px;background:#d4d0c8;box-shadow:inset 1px 1px 0 #fff"></div><i class="abs" style="left:11px;top:185px;width:1px;height:18px;background:#000"></i><i class="abs" style="left:0px;top:202px;width:12px;height:1px;background:#000"></i><i class="abs" style="left:12px;top:202px;width:400px;height:1px;background:#c0c0c0"></i><span class="t" style="left:14px;top:185px;line-height:18px;color:#000;transform:scaleX(0.9050)">1.1.1.5.</span><span class="t" style="left:82px;top:185px;line-height:18px;color:#000;transform:scaleX(0.8993)">ШД.013 3D</span><div class="abs" style="left:178px;top:185px;width:112px;height:17px;overflow:hidden"><span class="t" style="left:0px;top:0px;line-height:18px;color:#000;transform:scaleX(0.9050)">Ручка</span></div><svg class="ic" style="left:294px;top:186px" width="16" height="16" viewBox="0 0 16 16"><rect width="16" height="16" rx="2.5" fill="#1796de"/><path d="M8 2.9 L12.4 5.45 L12.4 10.55 L8 13.1 L3.6 10.55 L3.6 5.45 Z" fill="#1478d0" stroke="#fff" stroke-width="1.05" stroke-linejoin="round"/><path d="M3.6 5.45 L8 8 L12.4 5.45 M8 8 L8 13.1" fill="none" stroke="#fff" stroke-width="1.05" stroke-linejoin="round"/></svg><span class="t" style="left:312.6px;top:185px;line-height:18px;color:#000;transform:scaleX(0.8901)">3D Модель</span><div class="abs" style="left:0px;top:203px;width:11px;height:17px;background:#d4d0c8;box-shadow:inset 1px 1px 0 #fff"></div><i class="abs" style="left:11px;top:203px;width:1px;height:18px;background:#000"></i><i class="abs" style="left:0px;top:220px;width:12px;height:1px;background:#000"></i><i class="abs" style="left:12px;top:220px;width:400px;height:1px;background:#c0c0c0"></i><span class="t" style="left:14px;top:203px;line-height:18px;color:#000;transform:scaleX(0.9050)">1.1.1.6.</span><span class="t" style="left:82px;top:203px;line-height:18px;color:#000;transform:scaleX(0.8993)">ШД.013 3D</span><div class="abs" style="left:178px;top:203px;width:112px;height:17px;overflow:hidden"><span class="t" style="left:0px;top:0px;line-height:18px;color:#000;transform:scaleX(0.9050)">Ручка</span></div><svg class="ic" style="left:294px;top:204px" width="16" height="16" viewBox="0 0 16 16"><rect width="16" height="16" rx="2.5" fill="#1796de"/><path d="M8 2.9 L12.4 5.45 L12.4 10.55 L8 13.1 L3.6 10.55 L3.6 5.45 Z" fill="#1478d0" stroke="#fff" stroke-width="1.05" stroke-linejoin="round"/><path d="M3.6 5.45 L8 8 L12.4 5.45 M8 8 L8 13.1" fill="none" stroke="#fff" stroke-width="1.05" stroke-linejoin="round"/></svg><span class="t" style="left:312.6px;top:203px;line-height:18px;color:#000;transform:scaleX(0.8901)">3D Модель</span><div class="abs" style="left:0px;top:221px;width:11px;height:17px;background:#d4d0c8;box-shadow:inset 1px 1px 0 #fff"></div><i class="abs" style="left:11px;top:221px;width:1px;height:18px;background:#000"></i><i class="abs" style="left:0px;top:238px;width:12px;height:1px;background:#000"></i><i class="abs" style="left:12px;top:238px;width:400px;height:1px;background:#c0c0c0"></i><span class="t" style="left:14px;top:221px;line-height:18px;color:#000;transform:scaleX(0.9050)">1.1.2.</span><span class="t" style="left:82px;top:221px;line-height:18px;color:#000;transform:scaleX(0.8993)">ШД.010 3D</span><div class="abs" style="left:178px;top:221px;width:112px;height:17px;overflow:hidden"><span class="t" style="left:0px;top:0px;line-height:18px;color:#000;transform:scaleX(0.9050)">Стержень в сборе</span></div><svg class="ic" style="left:294px;top:222px" width="16" height="16" viewBox="0 0 16 16"><rect width="16" height="16" rx="2.5" fill="#1796de"/><path d="M8 2.9 L12.4 5.45 L12.4 10.55 L8 13.1 L3.6 10.55 L3.6 5.45 Z" fill="#1478d0" stroke="#fff" stroke-width="1.05" stroke-linejoin="round"/><path d="M3.6 5.45 L8 8 L12.4 5.45 M8 8 L8 13.1" fill="none" stroke="#fff" stroke-width="1.05" stroke-linejoin="round"/></svg><span class="t" style="left:312.6px;top:221px;line-height:18px;color:#000;transform:scaleX(0.8901)">3D Модель</span><i class="abs" style="left:79px;top:59px;width:1px;height:180px;background:#c0c0c0"></i><i class="abs" style="left:175px;top:59px;width:1px;height:180px;background:#c0c0c0"></i><i class="abs" style="left:291px;top:59px;width:1px;height:180px;background:#c0c0c0"></i></div><div class="trk abs" style="left:633px;top:100px;width:16px;height:243px"></div><div class="btn abs" style="left:633px;top:100px;width:16px;height:16px"><i class="abs" style="left:7px;top:6px;width:1px;height:1px;background:#000"></i><i class="abs" style="left:6px;top:7px;width:3px;height:1px;background:#000"></i><i class="abs" style="left:5px;top:8px;width:5px;height:1px;background:#000"></i><i class="abs" style="left:4px;top:9px;width:7px;height:1px;background:#000"></i></div><div class="btn abs" style="left:633px;top:116px;width:16px;height:16px"></div><div class="btn abs" style="left:633px;top:327px;width:16px;height:16px"><i class="abs" style="left:4px;top:6px;width:7px;height:1px;background:#000"></i><i class="abs" style="left:5px;top:7px;width:5px;height:1px;background:#000"></i><i class="abs" style="left:6px;top:8px;width:3px;height:1px;background:#000"></i><i class="abs" style="left:7px;top:9px;width:1px;height:1px;background:#000"></i></div><div class="trk abs" style="left:271px;top:343px;width:362px;height:16px"></div><div class="btn abs" style="left:271px;top:343px;width:16px;height:16px"><i class="abs" style="left:5px;top:7px;width:1px;height:1px;background:#000"></i><i class="abs" style="left:6px;top:6px;width:1px;height:3px;background:#000"></i><i class="abs" style="left:7px;top:5px;width:1px;height:5px;background:#000"></i><i class="abs" style="left:8px;top:4px;width:1px;height:7px;background:#000"></i></div><div class="btn abs" style="left:287px;top:343px;width:16px;height:16px"></div><div class="btn abs" style="left:617px;top:343px;width:16px;height:16px"><i class="abs" style="left:6px;top:4px;width:1px;height:7px;background:#000"></i><i class="abs" style="left:7px;top:5px;width:1px;height:5px;background:#000"></i><i class="abs" style="left:8px;top:6px;width:1px;height:3px;background:#000"></i><i class="abs" style="left:9px;top:7px;width:1px;height:1px;background:#000"></i></div><div class="abs" style="left:633px;top:343px;width:16px;height:16px;background:#d4d0c8"></div><div class="btn2 abs" style="left:555px;top:369px;width:75px;height:25px"></div><svg class="abs" style="left:562px;top:374px" width="16" height="16"><path d="M3.4 4 L10.6 12" stroke="#f00" stroke-width="3.4" stroke-linecap="round"/><path d="M12.4 2.6 L2.2 13.2" stroke="#f00" stroke-width="3.2" stroke-linecap="round"/><path d="M4.2 4.2 L11.1 12.1" stroke="#800000" stroke-width="2.7" stroke-linecap="round"/><path d="M12.8 3 L2.9 13.5" stroke="#800000" stroke-width="2.5" stroke-linecap="round"/></svg><span class="t" style="left:583px;top:373px;line-height:18px;color:#000;transform:scaleX(0.9412)">Закрыть</span></body></html>
